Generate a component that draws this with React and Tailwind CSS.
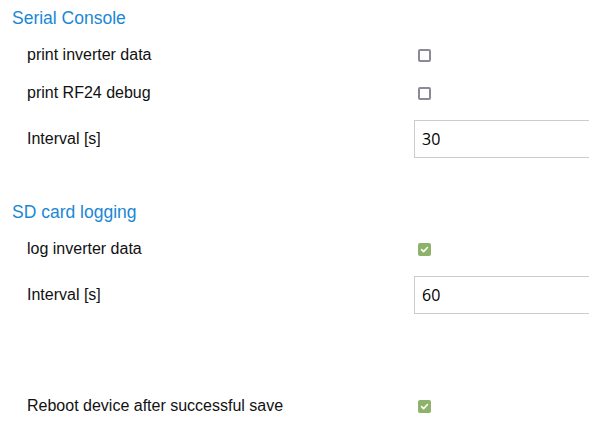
import React from "react";

function Box({ checked }) {
  if (checked) {
    return (
      <span className="ml-1 inline-flex h-[13px] w-[13px] shrink-0 items-center justify-center rounded-[2px] bg-[#8db36b]">
        <svg width="9" height="9" viewBox="0 0 10 10">
          <path d="M1.8 5.2 L4 7.3 L8.3 2.8" fill="none" stroke="#fff" strokeWidth="1.8" strokeLinecap="round" strokeLinejoin="round" />
        </svg>
      </span>
    );
  }
  return <span className="ml-1 inline-block h-[13px] w-[13px] shrink-0 rounded-[2px] border-2 border-[#8b8a96] bg-white" />;
}

function CheckRow({ label, checked }) {
  return (
    <div className="flex h-[38px] items-center">
      <div className="w-[402px] shrink-0 pl-[15px]">{label}</div>
      <Box checked={checked} />
    </div>
  );
}

function InputRow({ label, value }) {
  return (
    <div className="flex h-[53px] items-center">
      <div className="w-[402px] shrink-0 pl-[15px]">{label}</div>
      <div className="flex h-[38px] w-[220px] shrink-0 items-center border border-[#cccccc] pl-[7px] text-[16px] text-black" style={{ fontFamily: "'Open Sans', sans-serif" }}>
        {value}
      </div>
    </div>
  );
}

function Heading({ children }) {
  return <div className="flex h-[36px] items-center pt-[1px] text-[17.5px] text-[#1a87d6]">{children}</div>;
}

export default function App() {
  return (
    <div className="h-[445px] w-[589px] overflow-hidden bg-white pl-[12px] text-[16px] text-[#111]" style={{ fontFamily: "'Liberation Sans', Arial, sans-serif" }}>
      <Heading>Serial Console</Heading>
      <CheckRow label="print inverter data" />
      <CheckRow label="print RF24 debug" />
      <InputRow label="Interval [s]" value="30" />
      <div className="h-[29px]" />
      <Heading>SD card logging</Heading>
      <CheckRow label="log inverter data" checked />
      <InputRow label="Interval [s]" value="60" />
      <div className="h-[66px]" />
      <CheckRow label="Reboot device after successful save" checked />
    </div>
  );
}
